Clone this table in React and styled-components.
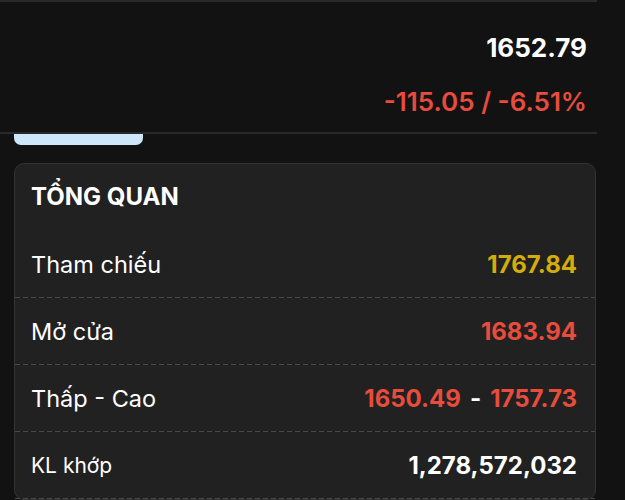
import React from "react";
import styled, { createGlobalStyle } from "styled-components";

const Global = createGlobalStyle`
  html, body { margin: 0; padding: 0; background: #121212; }
  body { font-family: Inter, "Noto Sans", "Liberation Sans", sans-serif; color: #fff; }
  * { box-sizing: border-box; }
`;

const Page = styled.div`
  width: 597px;
  border-top: 2px solid #2a2a2a;
`;

const Header = styled.header`
  display: flex;
  flex-direction: column;
  align-items: flex-end;
  gap: 24px;
  padding: 31px 10px 15px 0;
  border-bottom: 2px solid #2a2a2a;
`;

const Price = styled.div`
  font-size: 26px;
  line-height: 30px;
  font-weight: 700;
  color: #fff;
`;

const Change = styled.div`
  font-size: 26px;
  line-height: 30px;
  font-weight: 600;
  color: #e74c3c;
`;

const TabIndicator = styled.div`
  margin-left: 14px;
  width: 129px;
  height: 11px;
  background: #cde6fa;
  border-radius: 0 0 7px 7px;
`;

const Card = styled.section`
  margin: 18px 0 0 14px;
  width: 582px;
  background: #212121;
  border: 1px solid #333;
  border-radius: 10px;
  padding-top: 20px;
`;

const Title = styled.h2`
  margin: 0 0 21px;
  padding: 0 16px;
  font-size: 24px;
  line-height: 26px;
  font-weight: 700;
  color: #fff;
`;

const Row = styled.div`
  display: flex;
  align-items: center;
  justify-content: space-between;
  height: 67px;
  padding: 0 18px 1px 16px;
  background-image: linear-gradient(to right, #4a4a4a 5px, transparent 5px);
  background-size: 8px 1px;
  background-repeat: repeat-x;
  background-position: left bottom;
`;

const Label = styled.span`
  font-size: ${(p) => (p.$small ? "21px" : "23.5px")};
  font-weight: 400;
  color: #fff;
`;

const Value = styled.span`
  font-size: 24px;
  font-weight: 700;
  color: ${(p) => p.$color || "#fff"};
`;

const Range = styled.span`
  display: flex;
  align-items: center;
  gap: 9px;
`;

const COLORS = { ref: "#d4ac0d", down: "#e74c3c", white: "#fff" };

export default function App() {
  return (
    <>
      <Global />
      <Page>
        <Header>
          <Price>1652.79</Price>
          <Change>-115.05 / -6.51%</Change>
        </Header>
        <TabIndicator />
        <Card>
          <Title>TỔNG QUAN</Title>
          <Row>
            <Label>Tham chiếu</Label>
            <Value $color={COLORS.ref}>1767.84</Value>
          </Row>
          <Row>
            <Label>Mở cửa</Label>
            <Value $color={COLORS.down}>1683.94</Value>
          </Row>
          <Row>
            <Label>Thấp - Cao</Label>
            <Range>
              <Value $color={COLORS.down}>1650.49</Value>
              <Value>-</Value>
              <Value $color={COLORS.down}>1757.73</Value>
            </Range>
          </Row>
          <Row>
            <Label $small>KL khớp</Label>
            <Value>1,278,572,032</Value>
          </Row>
        </Card>
      </Page>
    </>
  );
}
